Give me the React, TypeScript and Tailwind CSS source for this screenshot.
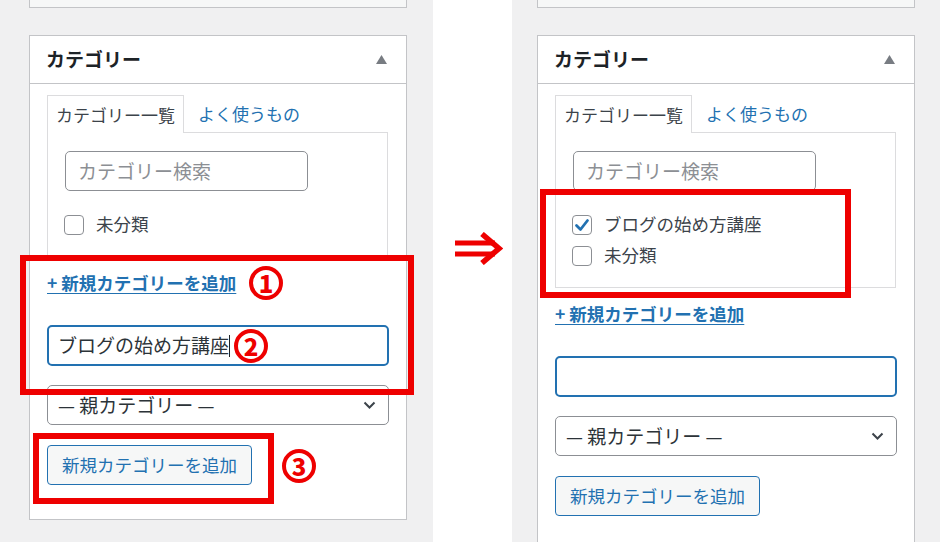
import React from "react";

function Checkbox({ checked }: { checked?: boolean }) {
  return (
    <span className="flex h-[20px] w-[20px] shrink-0 items-center justify-center rounded-[4px] border border-[#8c8f94] bg-white">
      {checked && (
        <svg width="16" height="16" viewBox="0 0 16 16">
          <path d="M2.5 8.5 L6.5 12.5 L13.5 3.5" fill="none" stroke="#2271b1" strokeWidth="2.8" strokeLinecap="round" strokeLinejoin="round" />
        </svg>
      )}
    </span>
  );
}

function Panel({ after }: { after: boolean }) {
  const items = after ? ["ブログの始め方講座", "未分類"] : ["未分類"];
  return (
    <div className="w-[378px]">
      <div className="h-[8px] border-x border-b border-[#c3c4c7] bg-[#f6f7f7]" />
      <div className="mt-[27px] border border-[#c3c4c7] bg-white">
        <div className="flex h-[48px] items-center justify-between border-b border-[#c3c4c7] pl-[16px] pr-[19px]">
          <span className="text-[19px] font-bold text-[#1d2327]">カテゴリー</span>
          <svg width="11" height="9" viewBox="0 0 11 9">
            <path d="M5.5 0 L11 9 L0 9 Z" fill="#787c82" />
          </svg>
        </div>
        <div className="pl-[17px] pr-[17px] pt-[11px] pb-[34px]">
          <div className="flex items-end">
            <div className="relative z-10 -mb-px flex h-[38px] items-center border border-b-0 border-[#dcdcde] bg-white px-[8px] text-[17px] text-[#3c434a]">
              カテゴリー一覧
            </div>
            <span className="ml-[14px] flex h-[37px] items-center text-[17px] text-[#2271b1]">よく使うもの</span>
          </div>
          <div className="mr-px border border-[#dcdcde] pl-[17px] pt-[18px] pb-[16px]">
            <div className="flex h-[40px] w-[243px] items-center rounded-[5px] border border-[#8c8f94] pl-[12px] text-[19px] text-[#8c8f94]">
              カテゴリー検索
            </div>
            <div className="mt-[18px] flex flex-col">
              {items.map((t, i) => (
                <div key={t} className="-ml-px flex h-[31px] items-center gap-[12px] text-[17.5px] text-[#3c434a]">
                  <Checkbox checked={after && i === 0} />
                  <span>{t}</span>
                </div>
              ))}
            </div>
          </div>
          <div className="mt-[14px] h-[24px] text-[17.5px] font-semibold leading-[24px] text-[#2271b1] underline underline-offset-[3px]">
            + 新規カテゴリーを追加
          </div>
          <div className="mt-[30px] flex h-[41px] items-center rounded-[5px] border-2 border-[#2271b1] pl-[9px] text-[19px] text-[#2c3338]">
            {after ? null : (
              <>
                <span>ブログの始め方講座</span>
                <span className="h-[22px] w-px bg-[#1d2327]" />
              </>
            )}
          </div>
          <div className="mt-[19px] flex h-[40px] items-center justify-between rounded-[5px] border border-[#8c8f94] pl-[10px] pr-[12px] text-[19px] text-[#2c3338]">
            <span>— 親カテゴリー —</span>
            <svg width="13" height="8" viewBox="0 0 13 8">
              <path d="M1.5 1.5 L6.5 6.5 L11.5 1.5" fill="none" stroke="#3c434a" strokeWidth="2" />
            </svg>
          </div>
          <div className="mt-[20px] flex h-[40px] w-[205px] items-center justify-center rounded-[4px] border border-[#2271b1] bg-[#f6f7f7] text-[17.5px] text-[#2271b1]">
            新規カテゴリーを追加
          </div>
        </div>
      </div>
    </div>
  );
}

function Num({ n, x, y }: { n: string; x: number; y: number }) {
  return (
    <span
      className="absolute flex h-[34px] w-[34px] items-center justify-center rounded-full border-[4px] border-[#ee0000] text-[24px] font-black leading-none text-[#ee0000]"
      style={{ left: x - 17, top: y - 17 }}
    >
      {n}
    </span>
  );
}

export default function App() {
  return (
    <div className="relative flex h-[542px] w-[940px] overflow-hidden bg-white font-['Noto_Sans_CJK_JP','Noto_Sans',sans-serif]">
      <div className="w-[433px] shrink-0 bg-[#f0f0f1] pl-[29px]">
        <Panel after={false} />
      </div>
      <div className="w-[79px] shrink-0 bg-white pl-[22px] pt-[232px]">
        <svg width="48" height="33" viewBox="0 0 48 33">
          <path d="M0 11 H40 M0 22 H40" stroke="#ee0000" strokeWidth="5" />
          <path d="M27 2 L44 16.5 L27 31" fill="none" stroke="#ee0000" strokeWidth="5.5" />
        </svg>
      </div>
      <div className="flex-1 bg-[#f0f0f1] pl-[25px]">
        <Panel after={true} />
      </div>

      <div className="absolute left-[20px] top-[255px] h-[140px] w-[394px] border-[6px] border-[#ee0000]" />
      <div className="absolute left-[33px] top-[433px] h-[71px] w-[241px] border-[6px] border-[#ee0000]" />
      <div className="absolute left-[540px] top-[189px] h-[109px] w-[311px] border-[6px] border-[#ee0000]" />

      <Num n="1" x={266} y={283} />
      <Num n="2" x={251} y={346} />
      <Num n="3" x={299} y={466} />
    </div>
  );
}
